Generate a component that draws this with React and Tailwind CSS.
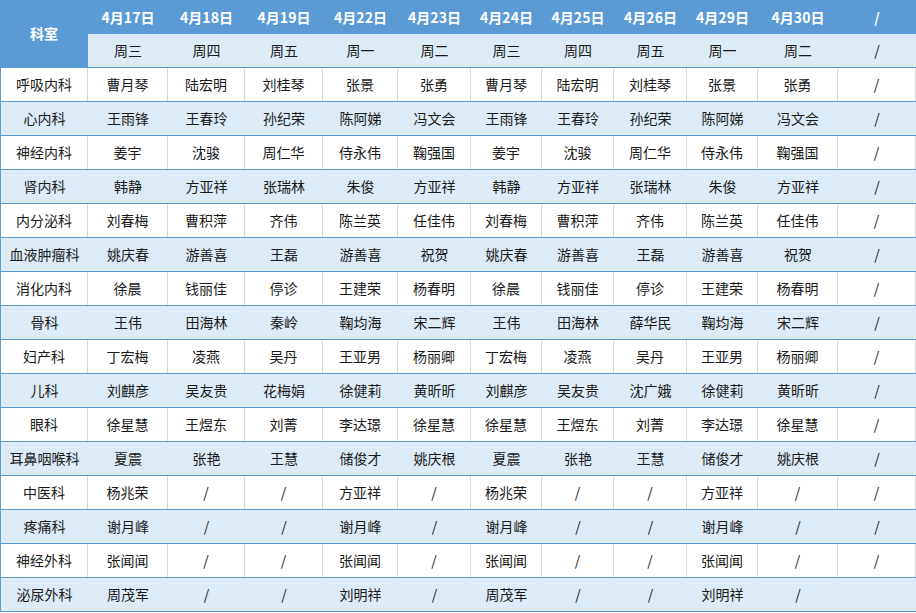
const dates = ['4月17日', '4月18日', '4月19日', '4月22日', '4月23日', '4月24日', '4月25日', '4月26日', '4月29日', '4月30日', '/'];
const weekdays = ['周三', '周四', '周五', '周一', '周二', '周三', '周四', '周五', '周一', '周二', '/'];

const rows = [
    ['呼吸内科', '曹月琴', '陆宏明', '刘桂琴', '张景', '张勇', '曹月琴', '陆宏明', '刘桂琴', '张景', '张勇', '/'],
    ['心内科', '王雨锋', '王春玲', '孙纪荣', '陈阿娣', '冯文会', '王雨锋', '王春玲', '孙纪荣', '陈阿娣', '冯文会', '/'],
    ['神经内科', '姜宇', '沈骏', '周仁华', '侍永伟', '鞠强国', '姜宇', '沈骏', '周仁华', '侍永伟', '鞠强国', '/'],
    ['肾内科', '韩静', '方亚祥', '张瑞林', '朱俊', '方亚祥', '韩静', '方亚祥', '张瑞林', '朱俊', '方亚祥', '/'],
    ['内分泌科', '刘春梅', '曹积萍', '齐伟', '陈兰英', '任佳伟', '刘春梅', '曹积萍', '齐伟', '陈兰英', '任佳伟', '/'],
    ['血液肿瘤科', '姚庆春', '游善喜', '王磊', '游善喜', '祝贺', '姚庆春', '游善喜', '王磊', '游善喜', '祝贺', '/'],
    ['消化内科', '徐晨', '钱丽佳', '停诊', '王建荣', '杨春明', '徐晨', '钱丽佳', '停诊', '王建荣', '杨春明', '/'],
    ['骨科', '王伟', '田海林', '秦岭', '鞠均海', '宋二辉', '王伟', '田海林', '薛华民', '鞠均海', '宋二辉', '/'],
    ['妇产科', '丁宏梅', '凌燕', '吴丹', '王亚男', '杨丽卿', '丁宏梅', '凌燕', '吴丹', '王亚男', '杨丽卿', '/'],
    ['儿科', '刘麒彦', '吴友贵', '花梅娟', '徐健莉', '黄昕昕', '刘麒彦', '吴友贵', '沈广娥', '徐健莉', '黄昕昕', '/'],
    ['眼科', '徐星慧', '王煜东', '刘菁', '李达璟', '徐星慧', '徐星慧', '王煜东', '刘菁', '李达璟', '徐星慧', '/'],
    ['耳鼻咽喉科', '夏震', '张艳', '王慧', '储俊才', '姚庆根', '夏震', '张艳', '王慧', '储俊才', '姚庆根', '/'],
    ['中医科', '杨兆荣', '/', '/', '方亚祥', '/', '杨兆荣', '/', '/', '方亚祥', '/', '/'],
    ['疼痛科', '谢月峰', '/', '/', '谢月峰', '/', '谢月峰', '/', '/', '谢月峰', '/', '/'],
    ['神经外科', '张闻闻', '/', '/', '张闻闻', '/', '张闻闻', '/', '/', '张闻闻', '/', '/'],
    ['泌尿外科', '周茂军', '/', '/', '刘明祥', '/', '周茂军', '/', '/', '刘明祥', '/', ''],
];

const cols = 'grid grid-cols-[88px_80px_77px_78px_75px_73px_71px_72px_73px_71px_80px_78px]';

export default function App() {
    return (
        <div
            className="w-[916px] h-[613px] bg-white text-[14px] text-[#1a1a1a] overflow-hidden"
            style={{ fontFamily: '"Noto Sans CJK SC", "Liberation Sans", sans-serif' }}
        >
            {/* header */}
            <div className={`${cols} grid-rows-[34px_33px] h-[68px] border-b border-[#5b9bd5]`}>
                <div className="row-span-2 bg-[#5b9bd5] text-white font-bold flex items-center justify-center">
                    科室
                </div>
                {dates.map((d, i) => (
                    <div key={'d' + i} className="bg-[#5b9bd5] text-white font-bold flex items-center justify-center">
                        {d}
                    </div>
                ))}
                {weekdays.map((w, i) => (
                    <div key={'w' + i} className="bg-[#ddebf7] flex items-center justify-center">
                        {w}
                    </div>
                ))}
            </div>

            {/* body */}
            {rows.map((row, r) => {
                const shaded = r % 2 === 1;
                return (
                    <div
                        key={r}
                        className={`${cols} h-[34px] border-b border-[#5b9bd5] ${shaded ? 'bg-[#ddebf7]' : 'bg-white'}`}
                    >
                        {row.map((cell, c) => (
                            <div
                                key={c}
                                className={`flex items-center justify-center ${
                                    shaded ? '' : 'border-r border-[#d9d9d9]'
                                } ${c === 0 ? 'border-l border-l-[#5b9bd5]' : ''}`}
                            >
                                {cell}
                            </div>
                        ))}
                    </div>
                );
            })}
        </div>
    );
}
